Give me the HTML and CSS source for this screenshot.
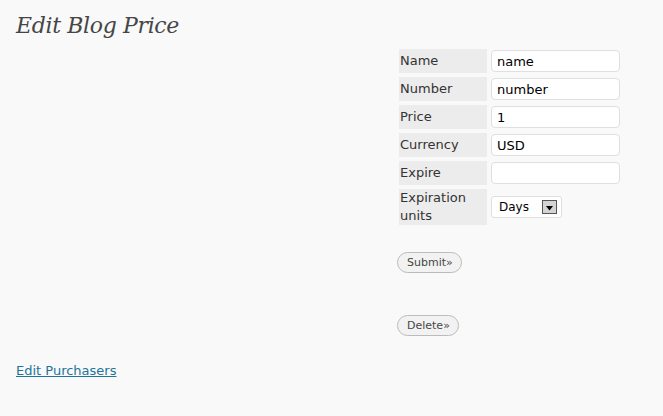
FILE: index.html
```html
<!DOCTYPE html>
<html>
<head>
<meta charset="utf-8">
<link rel="stylesheet" href="styles.css">
</head>
<body>
<div class="wrap">
  <h2 class="title">Edit Blog Price</h2>
  <div class="forms">
    <form class="price-form">
      <table class="form-table">
        <tr><th>Name</th><td><input class="field" type="text" value="name"></td></tr>
        <tr><th>Number</th><td><input class="field" type="text" value="number"></td></tr>
        <tr><th>Price</th><td><input class="field" type="text" value="1"></td></tr>
        <tr><th>Currency</th><td><input class="field" type="text" value="USD"></td></tr>
        <tr><th>Expire</th><td><input class="field" type="text" value=""></td></tr>
        <tr class="tall"><th>Expiration<br>units</th><td>
          <div class="select"><span class="sel-text">Days</span><span class="sel-arrow"><svg width="9" height="5" viewBox="0 0 9 5"><path d="M1 0h7L4.5 4.5z" fill="#000"/></svg></span></div>
        </td></tr>
      </table>
      <div class="btn-row submit-row"><span class="button">Submit&raquo;</span></div>
    </form>
    <form class="delete-form">
      <div class="btn-row"><span class="button">Delete&raquo;</span></div>
    </form>
  </div>
  <a class="link" href="#">Edit Purchasers</a>
</div>
</body>
</html>
```
FILE: styles.css
```css
html, body {
  margin: 0;
  padding: 0;
  background: #f9f9f9;
}
.wrap {
  padding: 0 16px;
  font-family: "DejaVu Sans", Verdana, sans-serif;
  font-size: 13px;
  color: #333;
}
.title {
  margin: 0;
  padding-top: 12px;
  font-family: "DejaVu Serif", Georgia, serif;
  font-style: italic;
  font-weight: normal;
  font-size: 22px;
  letter-spacing: -0.35px;
  line-height: 28px;
  color: #464646;
}
.forms {
  padding-left: 379px;
}
.form-table {
  border-spacing: 4px;
  margin-top: 5px;
}
.form-table th {
  width: 87px;
  height: 24px;
  padding: 0 0 0 1px;
  background: #ececec;
  text-align: left;
  font-weight: normal;
  font-size: 13px;
  color: #333;
  line-height: 18px;
}
.form-table td {
  padding: 0;
  vertical-align: middle;
}
.form-table .tall th {
  height: 36px;
}
.field {
  box-sizing: border-box;
  display: block;
  width: 129px;
  height: 22px;
  margin: 0;
  padding: 0 5px;
  border: 1px solid #dfdfdf;
  border-radius: 4px;
  background: #fff;
  font-family: "DejaVu Sans", Verdana, sans-serif;
  font-size: 13px;
  color: #000;
  outline: none;
}
.select {
  box-sizing: border-box;
  width: 71px;
  height: 22px;
  border: 1px solid #dfdfdf;
  border-radius: 3px;
  background: #fff;
  display: flex;
  align-items: center;
  justify-content: space-between;
  padding: 0 4px 0 7px;
  font-size: 12px;
  color: #000;
}
.sel-arrow {
  box-sizing: border-box;
  width: 15px;
  height: 14px;
  border: 1px solid #555;
  background: #d4d4d4;
  display: flex;
  align-items: center;
  justify-content: center;
  padding-top: 2px;
}
.btn-row {
  display: flex;
}
.submit-row {
  margin-top: 23px;
}
.delete-form {
  margin-top: 42px;
}
.button {
  box-sizing: border-box;
  height: 21px;
  padding: 0 8px 0 9px;
  border: 1px solid #bbb;
  border-radius: 11px;
  background: #f2f2f2;
  font-size: 11px;
  line-height: 19px;
  color: #464646;
  margin-left: 2px;
}
.link {
  display: inline-block;
  margin-top: 27px;
  color: #21759b;
  font-size: 13px;
  text-decoration: underline;
}
```
